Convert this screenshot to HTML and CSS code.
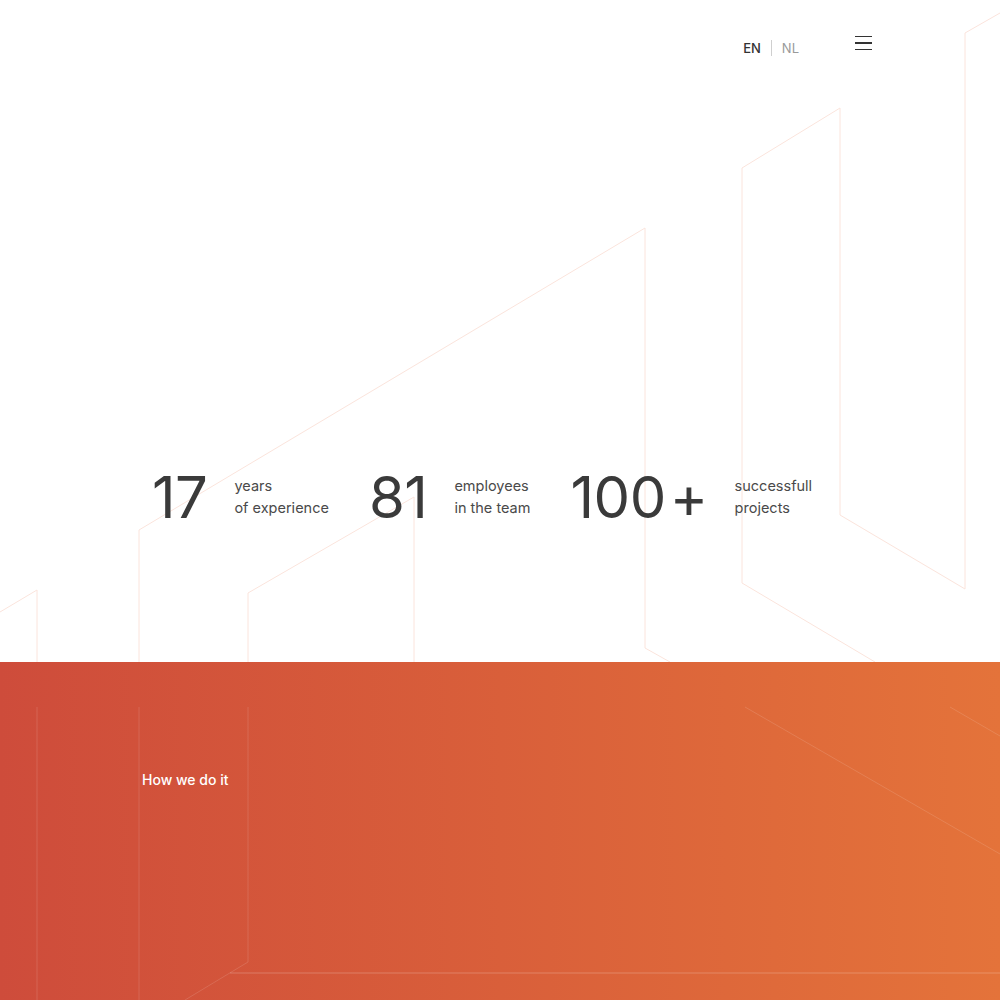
FILE: index.html
```html
<!DOCTYPE html>
<html lang="en">
<head>
    <meta charset="UTF-8">
    <meta name="viewport" content="width=device-width, initial-scale=1.0">
    <title>About us</title>
    <link rel="stylesheet" href="styles.css">
</head>
<body>
    <section class="hero">
        <svg class="hero-lines" viewBox="0 0 1000 662" preserveAspectRatio="none">
            <path d="M0 612 L37 590 L37 662"/>
            <path d="M139 662 L139 530 L645 228 L645 648 L670 662"/>
            <path d="M248 662 L248 593 L414 497 L414 662"/>
            <path d="M875 662 L742 583 L742 168 L840 108 L840 515 L965 589 L965 33 L1000 13"/>
        </svg>

        <header class="header">
            <div class="lang-switch">
                <a class="lang lang-active" href="#">EN</a>
                <span class="lang-divider"></span>
                <a class="lang" href="#">NL</a>
            </div>
            <button class="menu-btn" aria-label="Menu">
                <span></span>
                <span></span>
                <span></span>
            </button>
        </header>

        <div class="stats">
            <div class="stat">
                <span class="stat-number">17</span>
                <span class="stat-label">years<br>of experience</span>
            </div>
            <div class="stat">
                <span class="stat-number">81</span>
                <span class="stat-label">employees<br>in the team</span>
            </div>
            <div class="stat">
                <span class="stat-number">100<span class="plus">+</span></span>
                <span class="stat-label">successfull<br>projects</span>
            </div>
        </div>
    </section>

    <section class="process">
        <svg class="process-lines" viewBox="0 0 1000 338" preserveAspectRatio="none">
            <path d="M37 45 V338"/>
            <path d="M139 45 V338"/>
            <path d="M248 45 V300 L185 338"/>
            <path class="line-bright" d="M230 311 H1000"/>
            <path d="M745 45 L1000 192"/>
            <path d="M950 45 L1000 74"/>
        </svg>
        <h2 class="section-title">How we do it</h2>
    </section>
</body>
</html>
```

FILE: styles.css
```css
body {
    margin: 0;
    font-family: Inter, 'Noto Sans', sans-serif;
    background-color: #fff;
    color: #3a3a3a;
}

.hero {
    position: relative;
    height: 662px;
    overflow: hidden;
}

.hero-lines,
.process-lines {
    position: absolute;
    top: 0;
    left: 0;
    width: 100%;
    height: 100%;
    fill: none;
    stroke-width: 1;
}

.hero-lines {
    stroke: #fbe4dc;
}

.process-lines {
    stroke: rgba(255, 255, 255, 0.13);
}

.process-lines .line-bright {
    stroke: rgba(255, 255, 255, 0.22);
}

.header {
    position: relative;
    display: flex;
    justify-content: flex-end;
    align-items: center;
    gap: 56px;
    padding: 30px 128px 0 0;
}

.lang-switch {
    display: flex;
    align-items: center;
    gap: 10px;
    padding-top: 10px;
}

.lang {
    font-size: 13px;
    color: #9a9a9a;
    text-decoration: none;
}

.lang-active {
    color: #333;
    font-weight: 500;
}

.lang-divider {
    width: 1px;
    height: 16px;
    background-color: #cfcfcf;
}

.menu-btn {
    display: flex;
    flex-direction: column;
    gap: 5px;
    width: 17px;
    padding: 0;
    border: none;
    background: none;
    cursor: pointer;
}

.menu-btn span {
    display: block;
    height: 1.5px;
    background-color: #333;
}

.stats {
    position: relative;
    display: flex;
    align-items: center;
    gap: 40px;
    padding: 412px 0 0 152px;
}

.stat {
    display: flex;
    align-items: center;
    gap: 27px;
}

.stat-number {
    font-size: 58px;
    font-weight: 400;
    line-height: 1;
    letter-spacing: -0.5px;
    color: #3a3a3a;
}

.stat-number .plus {
    margin-left: 4px;
}

.stat-label {
    font-size: 14.5px;
    line-height: 22px;
    color: #4a4a4a;
}

.process {
    position: relative;
    height: 338px;
    background: linear-gradient(90deg, #ce4c3b 0%, #d95f3a 50%, #e4733a 100%);
    overflow: hidden;
}

.section-title {
    position: relative;
    margin: 0;
    padding: 109px 0 0 142px;
    font-size: 14px;
    font-weight: 500;
    color: #fff;
}
```
